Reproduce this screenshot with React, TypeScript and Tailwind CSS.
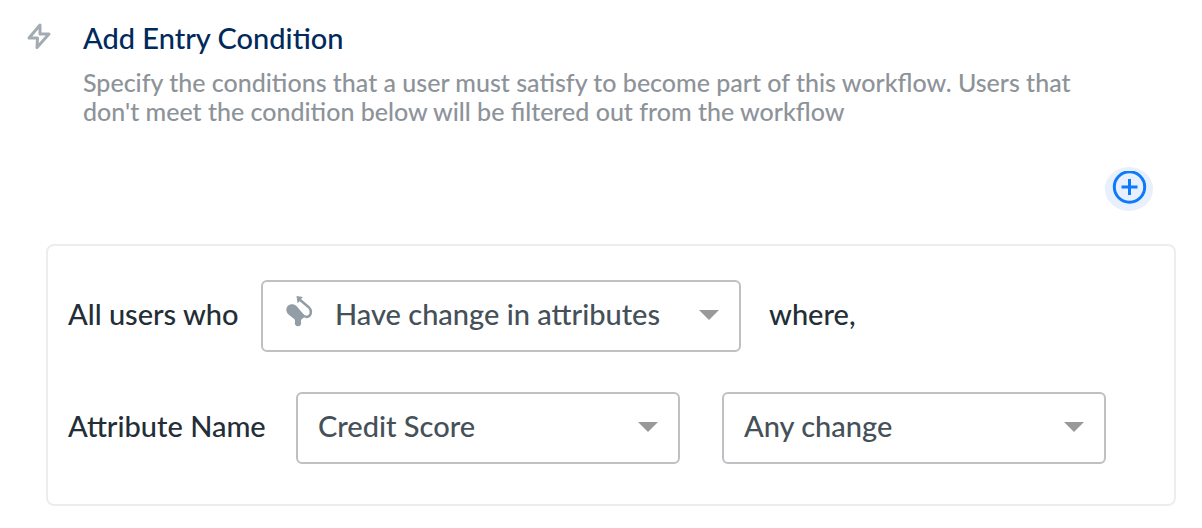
import type { ReactNode } from "react";

type DropdownProps = {
  id: string;
  label?: string;
  options: string[];
  className: string;
  icon?: ReactNode;
};

function Dropdown({ id, label, options, className, icon }: DropdownProps) {
  return (
    <div className={`relative ${className}`}>
      {icon && <span className="pointer-events-none absolute top-3 left-5">{icon}</span>}
      <select
        id={id}
        aria-label={label}
        className={`h-18 w-full appearance-none rounded-md border-2 border-[#bfbfc4] bg-white pr-16 pb-1 text-[#455059] ${icon ? "pl-18" : "pl-5"}`}
      >
        {options.map((option) => (
          <option key={option}>{option}</option>
        ))}
      </select>
      <svg
        className="pointer-events-none absolute top-7.5 right-5.5 h-2.5 w-5"
        viewBox="0 0 20 10"
        fill="#999"
        aria-hidden="true"
      >
        <path d="M0 0h20L10 10z" />
      </svg>
    </div>
  );
}

function BoltIcon() {
  return (
    <svg
      className="h-7 w-7 shrink-0"
      viewBox="0 0 28 28"
      fill="none"
      stroke="#a3acb3"
      strokeWidth="3"
      strokeLinejoin="round"
      aria-hidden="true"
    >
      <path d="M14 3 3 16h8.500L11 25.500 23 12h-9z" />
    </svg>
  );
}

function AttributeIcon() {
  return (
    <svg className="h-9 w-9" viewBox="0 0 36 36" aria-hidden="true">
      <path
        d="M9.500 12.500c-3 .5-4.500 3.500-4 6.500.4 2 2 3.500 3.500 4.800l4 3c1 .8 1.200 1.700 1 3.200a3.200 3.200 0 1 0 6 0c-.2-1.500.2-2.500 1.200-3.200l3-2.300L15.500 14c-2-1.500-4-2-6-1.500z"
        fill="#929da5"
      />
      <path d="m15.500 4 6.500 1-2 2-2.500 3.500L16.500 11z" fill="#929da5" />
      <path
        d="m18 7 10 8.500c3.500 3.500 2 9-2.500 9.500-2 0-3-1-4.500-2.500L16 17"
        fill="none"
        stroke="#929da5"
        strokeWidth="2.400"
      />
    </svg>
  );
}

export default function App() {
  return (
    <main className="bg-white pt-5 pr-6.5 pb-5.5 pl-6.5 font-['Lato','Open_Sans',sans-serif] text-[29px] leading-9 font-medium text-[#232e36]">
      <header className="flex gap-7">
        <div className="pt-0.5">
          <BoltIcon />
        </div>
        <div className="pl-px">
          <h1 className="text-[#002a5c]">Add Entry Condition</h1>
          <p className="mt-3 max-w-250 text-[25px] leading-[29px] text-[#8d9399]">
            Specify the conditions that a user must satisfy to become part of this workflow. Users that
            don't meet the condition below will be filtered out from the workflow
          </p>
        </div>
      </header>
      <div className="mt-[41px] flex justify-end pr-[23px]">
        <button
          type="button"
          aria-label="Add condition"
          className="flex h-11 w-12 justify-center rounded-[50%] bg-[#e8f0fd] pt-1"
        >
          <svg className="h-9 w-9" viewBox="0 0 36 36" fill="none" stroke="#0d79fb" strokeWidth="3" aria-hidden="true">
            <circle cx="18.500" cy="16" r="15.200" />
            <path d="M18.500 8v16M10.500 16h16" />
          </svg>
        </button>
      </div>
      <section className="mt-[33px] ml-5 rounded-lg border-2 border-[#ededee] px-5 pt-8.5 pb-10">
        <div className="flex items-center">
          <label htmlFor="trigger" className="w-[193px] shrink-0 pb-1">
            All users who
          </label>
          <Dropdown
            id="trigger"
            className="w-120"
            icon={<AttributeIcon />}
            options={["Have change in attributes"]}
          />
          <span className="ml-7 pb-1">where,</span>
        </div>
        <div className="mt-10 flex items-center">
          <label htmlFor="attribute" className="w-57 shrink-0 pb-1">
            Attribute Name
          </label>
          <Dropdown id="attribute" className="w-96" options={["Credit Score"]} />
          <Dropdown id="change" label="Change type" className="ml-10.5 w-96" options={["Any change"]} />
        </div>
      </section>
    </main>
  );
}
